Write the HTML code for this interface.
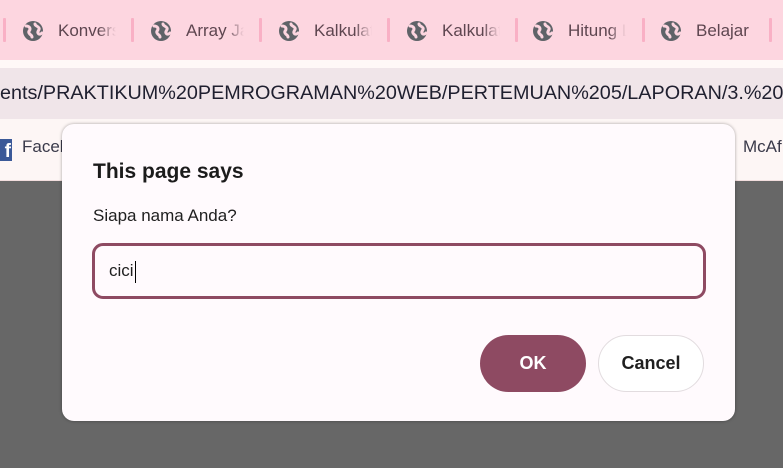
<!DOCTYPE html>
<html><head><meta charset="utf-8"><style>
*{margin:0;padding:0;box-sizing:border-box}
body{width:783px;height:468px;overflow:hidden;position:relative;background:#676767;font-family:"Segoe UI","Liberation Sans","DejaVu Sans",sans-serif}
.tabs{position:absolute;left:0;top:0;width:783px;height:60px;background:#fdd6e0}
.tab{position:absolute;top:19px;height:24px;display:flex;align-items:center;font-size:17px;color:#5e4650}
.tab span{display:block;width:58px;overflow:hidden;white-space:nowrap;-webkit-mask-image:linear-gradient(90deg,#000 70%,transparent 100%);mask-image:linear-gradient(90deg,#000 70%,transparent 100%)}
.sep{position:absolute;top:18px;width:3px;height:24px;background:#f9b0c5;border-radius:1px}
.globe{width:22px;height:22px;margin-right:14px;flex:none}
.strip{position:absolute;top:60px;left:0;width:783px;height:8px;background:#fff8f7}
.addr{position:absolute;top:68px;left:0;width:783px;height:51px;background:#f0e5e9;font-size:19.8px;color:#1f1f2f;line-height:51px;white-space:nowrap;overflow:hidden}
.bm{position:absolute;top:119px;left:0;width:783px;height:62px;background:#fdf6f5;border-bottom:1px solid #f2dede}
.dlg{position:absolute;left:62px;top:124px;width:673px;height:297px;background:#fffafd;border-radius:12px;box-shadow:0 0 3px rgba(0,0,0,.35)}
h1{position:absolute;left:31px;top:36px;font-size:21px;font-weight:600;color:#1b1b1b}
.msg{position:absolute;left:31px;top:82px;font-size:17px;color:#1f1f1f}
.inp{position:absolute;left:30px;top:119px;width:614px;height:56px;border:3px solid #8e4a62;border-radius:11px;font-size:17px;padding-left:14px;line-height:50px;color:#1f1f1f}
.caret{display:inline-block;width:1px;height:22px;background:#000;vertical-align:middle;margin-left:1px}
.ok{position:absolute;left:418px;top:211px;width:106px;height:57px;background:#8e4a62;border-radius:29px;color:#fff;font-weight:700;font-size:18px;text-align:center;line-height:57px}
.cancel{position:absolute;left:536px;top:211px;width:106px;height:57px;background:#fff;border:1.5px solid #e2dcdf;border-radius:29px;color:#1f1f1f;font-size:18px;font-weight:700;text-align:center;line-height:54px}
</style></head><body>
<svg width="0" height="0" style="position:absolute"><defs><symbol id="g" viewBox="0 0 22 22"><circle cx="11" cy="11" r="10" fill="#5f6368"/><path d="M4 6c2 0 4 1 4 3s-2 2-1 4 3 2 3 4" stroke="#fdd6e0" stroke-width="3" fill="none" stroke-linecap="round"/><path d="M13 4c0 2 3 2 4 4s-2 3-1 5 3 1 4 0" stroke="#fdd6e0" stroke-width="3" fill="none" stroke-linecap="round"/></symbol></defs></svg>
<div class="tabs">
<div class="sep" style="left:3px"></div>
<div class="tab" style="left:22px"><svg class="globe"><use href="#g"/></svg><span>Konversi</span></div>
<div class="sep" style="left:131px"></div>
<div class="tab" style="left:150px"><svg class="globe"><use href="#g"/></svg><span>Array Java</span></div>
<div class="sep" style="left:259px"></div>
<div class="tab" style="left:278px"><svg class="globe"><use href="#g"/></svg><span>Kalkulator</span></div>
<div class="sep" style="left:387px"></div>
<div class="tab" style="left:406px"><svg class="globe"><use href="#g"/></svg><span>Kalkulator</span></div>
<div class="sep" style="left:515px"></div>
<div class="tab" style="left:532px"><svg class="globe"><use href="#g"/></svg><span>Hitung L</span></div>
<div class="sep" style="left:642px"></div>
<div class="tab" style="left:660px"><svg class="globe"><use href="#g"/></svg><span style="-webkit-mask-image:none;mask-image:none">Belajar</span></div>
<div class="sep" style="left:769px"></div>
</div>
<div class="strip"></div>
<div class="addr">ents/PRAKTIKUM%20PEMROGRAMAN%20WEB/PERTEMUAN%205/LAPORAN/3.%20</div>
<div class="bm">
<div style="position:absolute;left:0;top:20px;width:12px;height:22px;background:#3b5998;color:#fff;font-weight:700;font-size:19px;line-height:25px;text-align:right;padding-right:1px">f</div>
<div style="position:absolute;left:22px;top:18px;font-size:17px;color:#3a3a4a">Faceb</div>
<div style="position:absolute;left:743px;top:18px;font-size:17px;color:#3a3a4a">McAf</div>
</div>
<div style="position:absolute;left:0;top:182px;width:783px;height:286px;background:#676767"></div>
<div class="dlg">
<h1>This page says</h1>
<div class="msg">Siapa nama Anda?</div>
<div class="inp">cici<span class="caret"></span></div>
<div class="ok">OK</div>
<div class="cancel">Cancel</div>
</div>
</body></html>
